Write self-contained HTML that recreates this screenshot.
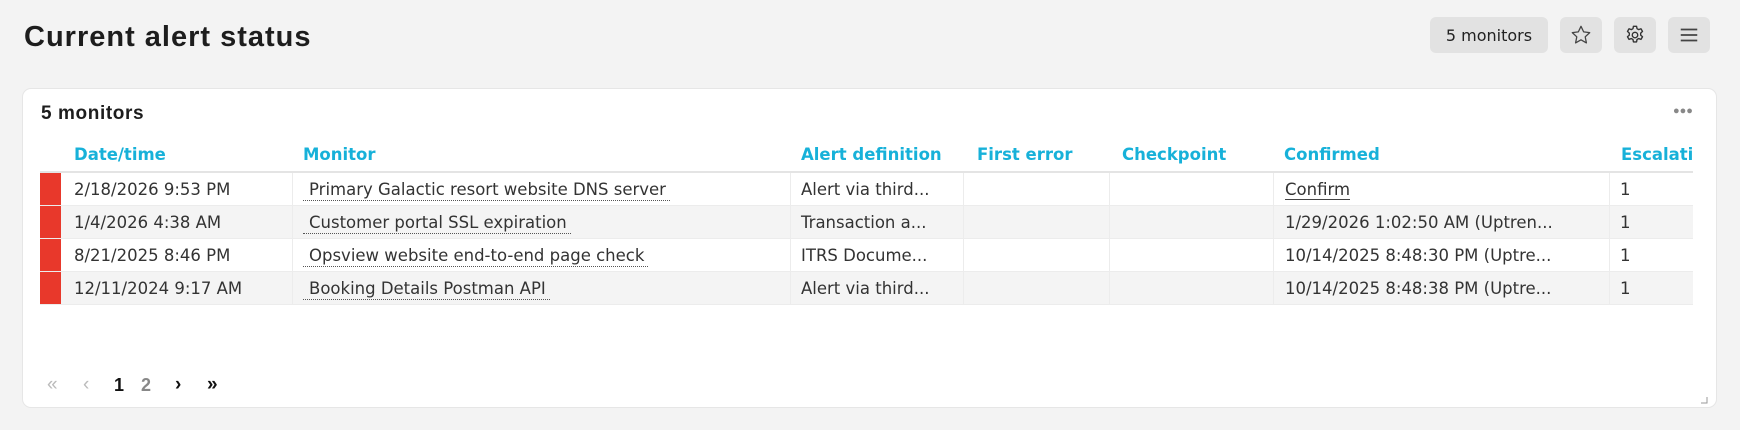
<!DOCTYPE html>
<html><head><meta charset="utf-8">
<style>
*{box-sizing:border-box;margin:0;padding:0}
body{width:1740px;height:430px;background:#f3f3f3;font-family:"Liberation Sans",sans-serif;color:#333;position:relative;overflow:hidden}
.abs{position:absolute}
h1{position:absolute;left:24px;top:21px;font-size:29px;font-weight:bold;color:#1d1d1d;letter-spacing:1px}
.btn{position:absolute;top:17px;height:36px;background:#e2e2e2;border-radius:6px;display:flex;align-items:center;justify-content:center}
.card{position:absolute;left:22px;top:88px;width:1695px;height:320px;background:#fff;border:1px solid #e6e6e6;border-radius:9px}
.ct{position:absolute;left:41px;top:103px;font-size:19px;font-weight:bold;color:#1d1d1d;letter-spacing:0.6px}
.th{position:absolute;top:145px;font-family:"DejaVu Sans",sans-serif;font-size:16.5px;font-weight:bold;color:#17b1d9;white-space:nowrap}
.hline{position:absolute;left:40px;width:1653px;top:171px;height:2px;background:#e4e4e4}
.row{position:absolute;left:40px;width:1653px;height:33px;border-bottom:1px solid #ececec}
.row .red{position:absolute;left:0;top:0;width:21px;height:100%;background:#e8382b}
.row .c{position:absolute;top:0;height:100%;border-left:1px solid #ececec;font-family:"DejaVu Sans",sans-serif;font-size:16.5px;line-height:33px;padding-left:10px;white-space:nowrap;overflow:hidden;color:#333}
.lnk{border-bottom:1px dotted #555;padding:0 4px 1px 6px}
.pg{position:absolute;top:374px;font-size:19px}
</style></head><body>
<h1>Current alert status</h1>
<div class="btn" style="left:1430px;width:118px;font-family:'DejaVu Sans',sans-serif;font-size:16px;color:#222">5 monitors</div>
<div class="btn" style="left:1560px;width:42px"><svg width="22" height="22" viewBox="0 0 24 24" fill="none" stroke="#444" stroke-width="1.4" stroke-linejoin="round"><path d="M12 2.5l2.9 6.1 6.6.8-4.9 4.6 1.3 6.6L12 17.3l-5.9 3.3 1.3-6.6-4.9-4.6 6.6-.8z"/></svg></div>
<div class="btn" style="left:1614px;width:42px"><svg width="22" height="22" viewBox="0 0 24 24" fill="none" stroke="#333" stroke-width="1.5" stroke-linejoin="round"><path d="M10.3 2.5h3.4l.5 2.6 1.8 1 2.5-.9 1.7 2.9-2 1.8v2.2l2 1.8-1.7 2.9-2.5-.9-1.8 1-.5 2.6h-3.4l-.5-2.6-1.8-1-2.5.9-1.7-2.9 2-1.8v-2.2l-2-1.8 1.7-2.9 2.5.9 1.8-1z"/><circle cx="12" cy="12" r="3"/></svg></div>
<div class="btn" style="left:1668px;width:42px"><svg width="22" height="22" viewBox="0 0 24 24" stroke="#444" stroke-width="1.8"><path d="M3 6h18M3 12h18M3 18h18"/></svg></div>

<div class="card"></div>
<div class="ct">5 monitors</div>
<div class="abs" style="left:1673px;top:105px;font-size:11px;color:#888">●●●</div>

<div class="th" style="left:74px">Date/time</div>
<div class="th" style="left:303px">Monitor</div>
<div class="th" style="left:801px">Alert definition</div>
<div class="th" style="left:977px">First error</div>
<div class="th" style="left:1122px">Checkpoint</div>
<div class="th" style="left:1284px">Confirmed</div>
<div class="abs" style="left:1609px;top:140px;width:84px;height:30px;overflow:hidden"><div class="th" style="left:12px;top:5px">Escalation</div></div>
<div class="hline"></div>

<div class="row" style="top:173px;background:#fff">
<div class="red"></div>
<div class="c" style="left:21px;width:231px;border-left:none;padding-left:13px">2/18/2026 9:53 PM</div>
<div class="c" style="left:252px;width:498px"><span class="lnk">Primary Galactic resort website DNS server</span></div>
<div class="c" style="left:750px;width:173px">Alert via third...</div>
<div class="c" style="left:923px;width:146px"></div>
<div class="c" style="left:1069px;width:164px"></div>
<div class="c" style="left:1233px;width:336px;padding-left:11px"><span style="border-bottom:1.5px solid #444">Confirm</span></div>
<div class="c" style="left:1569px;width:84px">1</div>
</div>
<div class="row" style="top:206px;background:#f4f4f4">
<div class="red"></div>
<div class="c" style="left:21px;width:231px;border-left:none;padding-left:13px">1/4/2026 4:38 AM</div>
<div class="c" style="left:252px;width:498px"><span class="lnk">Customer portal SSL expiration</span></div>
<div class="c" style="left:750px;width:173px">Transaction a...</div>
<div class="c" style="left:923px;width:146px"></div>
<div class="c" style="left:1069px;width:164px"></div>
<div class="c" style="left:1233px;width:336px;padding-left:11px">1/29/2026 1:02:50 AM (Uptren...</div>
<div class="c" style="left:1569px;width:84px">1</div>
</div>
<div class="row" style="top:239px;background:#fff">
<div class="red"></div>
<div class="c" style="left:21px;width:231px;border-left:none;padding-left:13px">8/21/2025 8:46 PM</div>
<div class="c" style="left:252px;width:498px"><span class="lnk">Opsview website end-to-end page check</span></div>
<div class="c" style="left:750px;width:173px">ITRS Docume...</div>
<div class="c" style="left:923px;width:146px"></div>
<div class="c" style="left:1069px;width:164px"></div>
<div class="c" style="left:1233px;width:336px;padding-left:11px">10/14/2025 8:48:30 PM (Uptre...</div>
<div class="c" style="left:1569px;width:84px">1</div>
</div>
<div class="row" style="top:272px;background:#f4f4f4">
<div class="red"></div>
<div class="c" style="left:21px;width:231px;border-left:none;padding-left:13px">12/11/2024 9:17 AM</div>
<div class="c" style="left:252px;width:498px"><span class="lnk">Booking Details Postman API</span></div>
<div class="c" style="left:750px;width:173px">Alert via third...</div>
<div class="c" style="left:923px;width:146px"></div>
<div class="c" style="left:1069px;width:164px"></div>
<div class="c" style="left:1233px;width:336px;padding-left:11px">10/14/2025 8:48:38 PM (Uptre...</div>
<div class="c" style="left:1569px;width:84px">1</div>
</div>

<div class="pg" style="left:47px;color:#bbb">«</div>
<div class="pg" style="left:83px;color:#bbb">‹</div>
<div class="pg" style="left:114px;color:#111;font-weight:bold;font-size:18px;top:375px">1</div>
<div class="pg" style="left:141px;color:#888;font-weight:bold;font-size:18px;top:375px">2</div>
<div class="pg" style="left:175px;color:#111;font-weight:bold">›</div>
<div class="pg" style="left:207px;color:#111;font-weight:bold">»</div>
<svg class="abs" style="left:1700px;top:396px" width="8" height="8"><path d="M7 1V7H1" fill="none" stroke="#999" stroke-width="1"/></svg>
</body></html>
